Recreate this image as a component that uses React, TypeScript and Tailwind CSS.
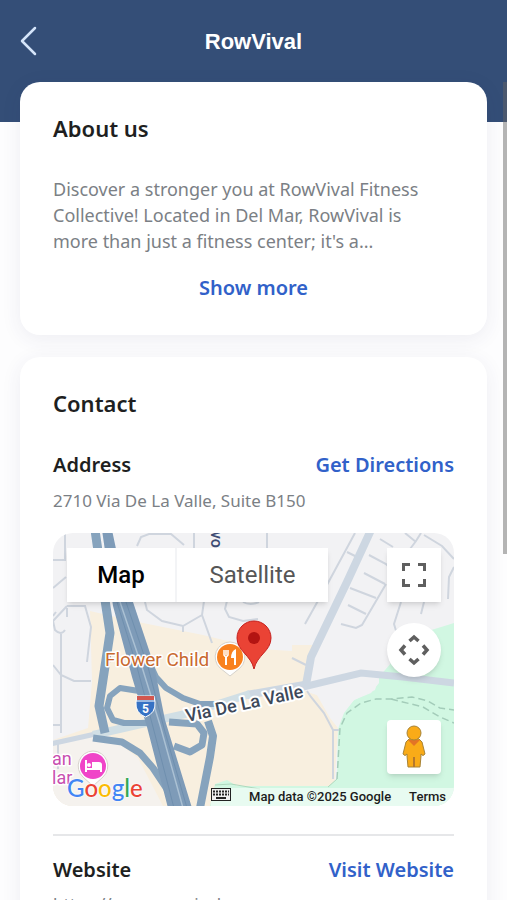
import React, { useState } from "react";

const description =
  "Discover a stronger you at RowVival Fitness Collective! Located in Del Mar, RowVival is more than just a fitness center; it's a...";

const cardStyles = "rounded-[20px] bg-white px-[33px] pt-8 pb-[33px] shadow-[0_4px_20px_rgba(50,50,100,0.08)]";
const linkStyles = "text-xl font-semibold text-[#3161c9]";

function MapDrawing() {
  return (
    <svg
      viewBox="0 0 401 273"
      preserveAspectRatio="xMidYMid slice"
      className="block h-[273px] w-full"
      role="img"
      aria-label="Map of 2710 Via De La Valle"
      fontFamily="Roboto, sans-serif"
    >
      <rect width="401" height="273" fill="#f2f2f4" />

      {/* Land areas */}
      <path d="M37 78L80 88L150 102L207 116L239 118V112H264L256 134L252 158L264 162L277 185L285 195L280 273H0V207L35 195L39 149Z" fill="#f8efdf" />
      <path d="M0 207L55 202L85 225L110 273H0Z" fill="#f5f2ee" />
      <path d="M401 90L372 99L345 122L326 144V150L318 160L301 167L291 180L285 196L284 246L276 253H184L174 247L162 251L157 273H401Z" fill="#d1f7e2" />
      <path d="M252 140L308 137L326 144L322 157L301 167L284 186L264 162L252 158Z" fill="#f2f2f4" />

      {/* Minor streets */}
      <g fill="none" stroke="#cfd5de" strokeWidth="2">
        <path d="M0 27H12V0M0 55L13 44M14 73H32L38 94L34 129M14 75V84M3 79L0 83M8 101V200M0 132L8 142L21 148H38M0 192H8M5 208V236" />
        <path d="M14 73L0 88L2 97Q8 103 12 97" />
        <path d="M84 13L88 4L96 1H118L131 12M141 0V15M92 69L94 77L109 88L130 93L149 82M130 93V99M149 82L159 110M151 68L149 82" />
        <path d="M174 68L172 76L176 84L190 88L205 86M190 69Q197 73 206 69M214 0V15" />
        <path d="M302 0L275 50L252 91M294 19L306 25M316 22L333 31L340 38M311 40L332 51M297 55L323 65M295 72L313 81M288 91L303 95L309 92L333 51M327 6L340 14" />
        <path d="M352 0L363 9M368 0L363 8L357 16M371 2L389 13L401 26M401 34L396 44L395 66M348 69L341 91L344 101M371 69L368 81M239 125L253 132" />
        <path d="M254 158L258 164L271 180L280 197V246M280 197H286" />
      </g>

      {/* Green trails */}
      <path d="M284 246L287 195L294 180L308 170L323 166L338 166L359 164L375 168L387 175L401 177M338 166L370 174L387 184L401 190" fill="none" stroke="#a3ccb9" strokeWidth="1.5" strokeDasharray="7 4" />
      <path d="M162 252L178 251L207 256M284 246L275 254" fill="none" stroke="#aed8bd" strokeWidth="1" />

      {/* Arterial roads */}
      <g fill="none" stroke="#cdd7e2">
        <path d="M318 -3L294 49L258 124L253 152" strokeWidth="8" />
        <path d="M-3 211L47 200" strokeWidth="5" />
        <path d="M194 162L257 151" strokeWidth="8" />
        <path d="M250 154L308 140L350 144L401 150" strokeWidth="7" />
        <path d="M40 202L97 189L137 180L197 161" stroke="#d1dfe5" strokeWidth="8" />
      </g>

      {/* Freeway ramps */}
      <g fill="none" stroke="#86a3bd" strokeWidth="7" strokeLinejoin="round">
        <path d="M42 -3L52 67L57 100L51 140L46 173L52 200" strokeWidth="9" />
        <path d="M96 129L103 144L113 155L130 165L147 171H167" strokeWidth="6" />
        <path d="M86 158L67 155L57 163L54 175L60 187L71 190H94" strokeWidth="6" />
        <path d="M116 189L144 191L151 200L149 212L137 219L121 213" strokeWidth="7" />
        <path d="M40 205L69 209L87 220L100 235L116 259" />
        <path d="M155 188L160 203L157 224L147 275" strokeWidth="8" />
      </g>

      {/* Interstate 5 */}
      <path d="M49 -3H59L66 30L80 69L101 132L112 187L139 275H115L94 194L79 144L60 73Z" fill="#7e9bb8" />
      <path d="M67 69L89 134L107 192L130 275" fill="none" stroke="#aac0d3" strokeWidth="1.5" />
      <path d="M64 69L84 134L100 194L121 275M73 69L95 134L112 199L134 275" fill="none" stroke="#6f8fae" strokeWidth="1" />

      {/* Road label */}
      <text x="134" y="189" transform="rotate(-12 134 189)" fontSize="18" fontWeight="500" fill="#3d4859" stroke="#fff" strokeWidth="4" strokeLinejoin="round" paintOrder="stroke">
        Via De La Valle
      </text>
      <text x="158" y="-2" transform="rotate(90 158 -2)" fontSize="16" fontWeight="500" fill="#3d4c73">vo</text>

      {/* Interstate shield */}
      <g transform="translate(83 163)">
        <path d="M1 0H18L19 6Q20 17 9.5 21Q-1 17 0 6Z" fill="#3672c4" stroke="#fff" />
        <path d="M1 0H18V4H1Z" fill="#d2574f" />
        <path d="M0 5H19" stroke="#fff" />
        <text x="9.5" y="17" textAnchor="middle" fontSize="12" fontWeight="700" fill="#fff">5</text>
      </g>

      {/* Restaurant */}
      <text x="52" y="133" fontSize="19" fill="#c9692f" stroke="#fff" strokeWidth="3" strokeLinejoin="round" paintOrder="stroke">Flower Child</text>
      <path d="M177 109A15 15 0 0 1 187 135L177 143L167 135A15 15 0 0 1 177 109Z" fill="#fff" stroke="#d6d2cb" />
      <circle cx="177" cy="124" r="13" fill="#f9811e" />
      <g stroke="#fff" fill="none">
        <path d="M171 117V122Q173 125 175 122V117M173 117V122" strokeWidth="1.5" />
        <path d="M173 123V132M182 123V132" strokeWidth="2" />
      </g>
      <path d="M183 116V125H178Q178 118 183 116Z" fill="#fff" />

      {/* Hotel */}
      <g fontSize="18" fill="#c94fb0" stroke="#fff" strokeWidth="3" strokeLinejoin="round" paintOrder="stroke">
        <text x="-1" y="232">an</text>
        <text x="-1" y="251">lar</text>
      </g>
      <path d="M40 218A15 15 0 0 1 50 244L40 253L30 244A15 15 0 0 1 40 218Z" fill="#fff" stroke="#d6d2cb" />
      <circle cx="40" cy="233" r="13" fill="#f045c8" />
      <path d="M33 227V239M33 236H48V239" fill="none" stroke="#fff" strokeWidth="2" />
      <path d="M39 229H46Q49 229 49 232V236H39Z" fill="#fff" />
      <circle cx="36" cy="232" r="2" fill="#fff" />

      {/* Location pin */}
      <path d="M201 136C198 122 184 118 184 105A17 17 0 0 1 218 105C218 118 204 122 201 136Z" fill="#ea4335" stroke="#c5221f" />
      <circle cx="201" cy="105" r="6" fill="#b31412" />
    </svg>
  );
}

function PegmanIcon() {
  return (
    <svg width="26" height="44" viewBox="0 0 26 44" aria-hidden="true">
      <path d="M8 14H18L21 17L24 29Q22 32 20 29V31L19 42H7L6 31V29Q4 32 2 29L5 17Z" fill="#f9ab18" stroke="#a78336" />
      <path d="M13 32V42" stroke="#b5782c" strokeWidth="2" />
      <path d="M7 15H19L13 21Z" fill="#e37425" />
      <circle cx="13" cy="8" r="7" fill="#f9ab18" stroke="#a78336" />
    </svg>
  );
}

function GoogleLogo() {
  const letters = [
    ["G", "text-[#4285f4]"],
    ["o", "text-[#ea4335]"],
    ["o", "text-[#fbbc04]"],
    ["g", "text-[#4285f4]"],
    ["l", "text-[#34a853]"],
    ["e", "text-[#ea4335]"],
  ];
  return (
    <a
      href="#google"
      aria-label="Google"
      className="absolute bottom-0.5 left-3.5 font-[Lato,sans-serif] text-2xl leading-8 font-medium [text-shadow:0_0_2px_white,0_0_2px_white]"
    >
      {letters.map(([letter, color], index) => (
        <span key={index} className={color}>{letter}</span>
      ))}
    </a>
  );
}

function LocationMap() {
  const [mapType, setMapType] = useState("map");
  const control = "absolute right-[13px] flex size-[54px] items-center justify-center bg-white text-[#5f5f5f] shadow-md";

  return (
    <div className="relative overflow-hidden rounded-[20px] font-[Roboto,sans-serif]">
      <MapDrawing />

      <div className="absolute top-[15px] left-3.5 flex h-[54px] bg-white text-2xl shadow-md">
        <button
          onClick={() => setMapType("map")}
          className={mapType === "map" ? "w-[110px] border-r-2 border-gray-100 font-medium text-black" : "w-[110px] border-r-2 border-gray-100 text-[#565656]"}
        >
          Map
        </button>
        <button
          onClick={() => setMapType("satellite")}
          className={mapType === "satellite" ? "w-[151px] font-medium text-black" : "w-[151px] text-[#565656]"}
        >
          Satellite
        </button>
      </div>

      <button aria-label="Toggle fullscreen view" className={`${control} top-[15px]`}>
        <svg width="26" height="26" viewBox="0 0 26 26" fill="none" stroke="currentColor" strokeWidth="3" aria-hidden="true">
          <path d="M9 2.5H2.5V9M17 2.5H23.5V9M2.5 17V23.5H9M23.5 17V23.5H17" />
        </svg>
      </button>
      <button aria-label="Map camera controls" className={`${control} top-[90px] rounded-full`}>
        <svg width="32" height="32" viewBox="0 0 32 32" fill="none" stroke="currentColor" strokeWidth="3.5" aria-hidden="true">
          <path d="M11.5 7L16 3L20.5 7M11.5 25L16 29L20.5 25M7 11.5L3 16L7 20.5M25 11.5L29 16L25 20.5" />
        </svg>
      </button>
      <button aria-label="Open Street View" className={`${control} bottom-8 rounded-sm`}>
        <PegmanIcon />
      </button>

      <GoogleLogo />
      <div className="absolute right-0 bottom-0 flex h-[18px] items-center gap-[18px] bg-white/50 pr-2 text-[13px] leading-4 font-medium text-[#1c1c1c]">
        <button aria-label="Keyboard shortcuts">
          <svg width="20" height="18" viewBox="0 0 20 18" aria-hidden="true">
            <rect x="0.5" y="0.5" width="19" height="12" fill="#eee" stroke="#222" />
            <path d="M2 3.5H18M2 6.5H18" stroke="#222" strokeWidth="2" strokeDasharray="2 1" />
            <path d="M5 10H15" stroke="#222" strokeWidth="2" />
          </svg>
        </button>
        <span>Map data ©2025 Google</span>
        <a href="#terms">Terms</a>
      </div>
    </div>
  );
}

export default function App() {
  const [expanded, setExpanded] = useState(false);

  return (
    <div className="relative h-screen overflow-hidden bg-[#fdfdfe] font-['Noto_Sans',sans-serif] text-[#1e1f21]">
      <header className="h-[122px] bg-[#344e77]">
        <div className="grid h-[82px] grid-cols-[40px_1fr_40px] items-center px-4">
          <button aria-label="Go back" className="text-[#d5e5fa]">
            <svg width="24" height="30" viewBox="0 0 24 30" fill="none" stroke="currentColor" strokeWidth="2.5" strokeLinecap="round" strokeLinejoin="round" aria-hidden="true">
              <path d="M19 2L6 15L19 28" />
            </svg>
          </button>
          <h1 className="text-center font-[Liberation_Sans,sans-serif] text-[22px] font-bold text-white">RowVival</h1>
        </div>
      </header>

      <main className="-mt-10 flex flex-col gap-[22px] px-5">
        <section className={cardStyles}>
          <h2 className="text-[22px] leading-7 font-semibold">About us</h2>
          <p className="mt-[34px] pr-4 text-lg leading-[26px] text-[#7b8085]">{description}</p>
          <div className="mt-5 text-center">
            <button onClick={() => setExpanded(!expanded)} aria-expanded={expanded} className={linkStyles}>
              {expanded ? "Show less" : "Show more"}
            </button>
          </div>
        </section>

        <section className={cardStyles}>
          <h2 className="text-[22px] leading-7 font-semibold">Contact</h2>
          <div className="mt-[34px] flex items-center justify-between">
            <h3 className="text-xl font-semibold">Address</h3>
            <a href="#directions" className={linkStyles}>Get Directions</a>
          </div>
          <p className="mt-2.5 mb-5 text-[17px] leading-6 text-[#7b8085]">2710 Via De La Valle, Suite B150</p>
          <LocationMap />
          <div className="mt-7 flex items-center justify-between border-t-2 border-[#e6e7e9] pt-5">
            <h3 className="text-xl font-semibold">Website</h3>
            <a href="#website" className={linkStyles}>Visit Website</a>
          </div>
          <p className="mt-2 text-[17px] leading-6 text-[#7b8085]">https://www.rowvival.com</p>
        </section>
      </main>

      {/* Scroll indicator */}
      <div className="absolute top-[82px] right-0 h-[472px] w-1 bg-[#6464647a]" />
    </div>
  );
}
